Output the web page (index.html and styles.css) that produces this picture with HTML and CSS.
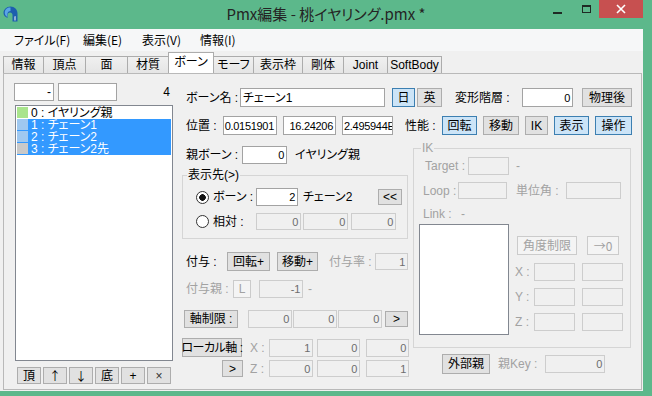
FILE: index.html
```html
<!DOCTYPE html>
<html lang="ja">
<head>
<meta charset="utf-8">
<title>Pmx編集</title>
<link rel="stylesheet" href="styles.css">
</head>
<body>
<div class="win">
  <div class="titlebar">
    <div class="tl">
      <svg class="appicon" width="15" height="16" viewBox="0 0 15 16">
        <path d="M7.5 0.5C11.5 0.5 14.5 3.5 14.5 7.5L14.5 15.5L9.5 15.5L9.5 9C9.5 7.5 8.5 6.5 7 6.5C5.5 6.5 4.5 7.5 4.5 9L4.5 12C2 11 0.5 9 0.5 7C0.5 3.5 3.5 0.5 7.5 0.5Z" fill="#1d5fae"/>
        <path d="M6 1.5C3.5 2 1.5 4.5 1.8 7.2C2 9 3 10.2 4.3 11L4.3 8.5C4.3 6 6 5 7.5 5L7.5 1.4Z" fill="#5aa5e6"/>
        <path d="M11.5 10.5L12.5 10L12.5 14.5L11.5 14.5Z" fill="#fff"/>
      </svg>
    </div>
    <div class="title">Pmx編集 - 桃イヤリング.pmx *</div>
    <div class="wbtns">
      <div class="wmin"></div>
      <div class="wmax"></div>
      <div class="wclose">
        <svg width="10" height="10" viewBox="0 0 10 10"><path d="M1 1L9 9M9 1L1 9" stroke="#fff" stroke-width="1.6"/></svg>
      </div>
    </div>
  </div>
  <div class="frame">
    <div class="client">
      <div class="menubar">
        <span class="mi w69">ファイル(F)</span>
        <span class="mi w59">編集(E)</span>
        <span class="mi w58">表示(V)</span>
        <span class="mi">情報(I)</span>
      </div>
      <div class="tabs">
        <div class="tab w41">情報</div>
        <div class="tab w43">頂点</div>
        <div class="tab w43">面</div>
        <div class="tab w42">材質</div>
        <div class="tab sel w46">ボーン</div>
        <div class="tab w41">モーフ</div>
        <div class="tab w50">表示枠</div>
        <div class="tab w42">剛体</div>
        <div class="tab w45">Joint</div>
        <div class="tab w55">SoftBody</div>
      </div>
      <div class="page">
        <div class="leftcol">
          <div class="row h18">
            <div class="tb w40 r">-</div>
            <div class="tb w59 ml4"></div>
            <div class="count">4</div>
          </div>
          <div class="list">
            <div class="li"><span class="sw sw-g"></span>0 : イヤリング親</div>
            <div class="li sel"><span class="sw sw-b"></span>1 : チェーン1</div>
            <div class="li sel"><span class="sw sw-b"></span>2 : チェーン2</div>
            <div class="li sel"><span class="sw sw-x"></span>3 : チェーン2先</div>
          </div>
          <div class="row h17 mt6 ml3 gap2">
            <div class="btn w24">頂</div>
            <div class="btn w24 sym">↑</div>
            <div class="btn w24 sym">↓</div>
            <div class="btn w24">底</div>
            <div class="btn w24">+</div>
            <div class="btn w24 thin">×</div>
          </div>
        </div>

        <div class="rightcol">
          <div class="row h19 mt5">
            <div class="lbl w54 ml5">ボーン名 :</div>
            <div class="tb w145">チェーン1</div>
            <div class="btn on w23 ml7">日</div>
            <div class="btn w25 ml2">英</div>
            <div class="lbl w67 ml13">変形階層 :</div>
            <div class="tb w51 r num">0</div>
            <div class="btn w50 ml9">物理後</div>
          </div>
          <div class="row h19 mt9">
            <div class="lbl w37 ml5">位置 :</div>
            <div class="tb w54 r num">0.0151901</div>
            <div class="tb w53 ml6 r num">16.24206</div>
            <div class="tb w51 ml6 num tight">2.495944E-07</div>
            <div class="lbl w37 ml12">性能 :</div>
            <div class="btn on w35">回転</div>
            <div class="btn w36 ml6">移動</div>
            <div class="btn w23 ml6">IK</div>
            <div class="btn on w35 ml6">表示</div>
            <div class="btn on w37 ml6">操作</div>
          </div>

          <div class="section">
            <div class="subl">
              <div class="row h18 mt11">
                <div class="lbl w56 ml5">親ボーン :</div>
                <div class="tb w45 r num">0</div>
                <div class="lbl ml8">イヤリング親</div>
              </div>
              <fieldset class="grp grp-disp mt4 ml1">
                <legend>表示先(&gt;)</legend>
                <div class="row h18 mt6">
                  <span class="radio on ml13"></span>
                  <div class="lbl w43 ml4">ボーン :</div>
                  <div class="tb w42 r num">2</div>
                  <div class="lbl ml5">チェーン2</div>
                  <div class="btn w24 sh16 push">&lt;&lt;</div>
                </div>
                <div class="row h17 mt7">
                  <span class="radio ml13"></span>
                  <div class="lbl w43 ml4">相対 :</div>
                  <div class="tb dis w45 r num">0</div>
                  <div class="tb dis w45 ml2 r num">0</div>
                  <div class="tb dis w45 ml3 r num">0</div>
                </div>
              </fieldset>
              <div class="row h19 mt13">
                <div class="lbl w41 ml5">付与 :</div>
                <div class="btn w43">回転+</div>
                <div class="btn w41 ml7">移動+</div>
                <div class="lbl dis w46 ml11">付与率 :</div>
                <div class="tb dis w33 sh17 r num">1</div>
              </div>
              <div class="row h18 mt9">
                <div class="lbl dis w47 ml5">付与親 :</div>
                <div class="btn dis w18">L</div>
                <div class="tb dis w44 ml8 r num">-1</div>
                <div class="lbl dis ml5">-</div>
              </div>
              <div class="row h18 mt12">
                <div class="btn w54 ml3">軸制限 :</div>
                <div class="tb dis w44 ml10 r num">0</div>
                <div class="tb dis w44 ml1 r num">0</div>
                <div class="tb dis w44 ml1 r num">0</div>
                <div class="btn w23 ml3 sh16">&gt;</div>
              </div>
              <div class="row h19 mt10">
                <div class="btn w60 ml1 narrow">ローカル軸 :</div>
                <div class="lbl dis w19 ml8">X :</div>
                <div class="tb dis w44 sh18 r num">1</div>
                <div class="tb dis w43 sh18 ml4 r num">0</div>
                <div class="tb dis w43 sh18 ml6 r num">0</div>
              </div>
              <div class="row h17 mt3">
                <div class="btn w21 ml41">&gt;</div>
                <div class="lbl dis w19 ml7">Z :</div>
                <div class="tb dis w44 r num">0</div>
                <div class="tb dis w43 ml4 r num">0</div>
                <div class="tb dis w43 ml6 r num">1</div>
              </div>
            </div>

            <div class="subr">
              <fieldset class="grp grp-ik mt6">
                <legend class="dis">IK</legend>
                <div class="row h18 mt2">
                  <div class="lbl dis w43 ml11">Target :</div>
                  <div class="tb dis w41"></div>
                  <div class="lbl dis ml7">-</div>
                </div>
                <div class="row h17 mt7">
                  <div class="lbl dis w35 ml9">Loop :</div>
                  <div class="tb dis w49"></div>
                  <div class="lbl dis w50 ml9">単位角 :</div>
                  <div class="tb dis w55"></div>
                </div>
                <div class="row h14 mt8">
                  <div class="lbl dis w38 ml9">Link :</div>
                  <div class="lbl dis">-</div>
                </div>
                <div class="ikbody mt3">
                  <div class="linklist ml5"></div>
                  <div class="ikside ml6">
                    <div class="row h19 mt12">
                      <div class="btn dis w60 ml2">角度制限</div>
                      <div class="btn dis w32 ml10 sym">→0</div>
                    </div>
                    <div class="row h18 mt8">
                      <div class="lbl dis w19">X :</div>
                      <div class="tb dis w41"></div>
                      <div class="tb dis w41 ml7"></div>
                    </div>
                    <div class="row h18 mt7">
                      <div class="lbl dis w19">Y :</div>
                      <div class="tb dis w41"></div>
                      <div class="tb dis w41 ml7"></div>
                    </div>
                    <div class="row h18 mt7">
                      <div class="lbl dis w19">Z :</div>
                      <div class="tb dis w41"></div>
                      <div class="tb dis w41 ml7"></div>
                    </div>
                  </div>
                </div>
              </fieldset>
              <div class="row h20 mt6">
                <div class="btn w48 ml29">外部親</div>
                <div class="lbl dis w47 ml8">親Key :</div>
                <div class="tb dis w60 sh18 r num">0</div>
              </div>
            </div>
          </div>
        </div>
      </div>
    </div>
  </div>
</div>
</body>
</html>
```
FILE: styles.css
```css
* { box-sizing: border-box; }
html, body { margin: 0; padding: 0; }
body {
  width: 652px;
  height: 396px;
  overflow: hidden;
  background: #5cb88b;
  color: #000;
  font: 12px/14px "Liberation Sans", "Noto Sans CJK JP", sans-serif;
  font-feature-settings: "palt" 1;
}
.win { display: flex; flex-direction: column; height: 396px; }

/* title bar */
.titlebar {
  height: 29px;
  flex: none;
  display: grid;
  grid-template-columns: 1fr auto 1fr;
  align-items: start;
}
.appicon { display: block; margin: 6px 0 0 3px; }
.title {
  font-family: "Noto Sans CJK JP", "Liberation Sans", sans-serif;
  font-size: 15px;
  line-height: 18px;
  margin-top: 5px;
  color: #242424;
  white-space: nowrap;
}
.wbtns { display: flex; justify-content: flex-end; align-items: flex-start; }
.wmin { width: 9px; height: 2px; background: #1f2a24; margin: 12px 20px 0 0; }
.wmax { width: 9px; height: 8px; border: 1px solid #1f2a24; border-top-width: 2px; margin: 5px 8px 0 0; }
.wclose {
  width: 44px; height: 18px; margin-right: 9px;
  background: #c75050;
  display: flex; align-items: center; justify-content: center;
}
.wclose svg { display: block; }

/* frame */
.frame { flex: none; height: 362px; display: flex; }
.client { width: 643px; height: 362px; background: #f0f0f0; display: flex; flex-direction: column; }

.menubar {
  height: 22px; flex: none;
  background: #f6f7f8;
  display: flex; align-items: center;
  padding-left: 14px;
  font-family: "Noto Sans CJK JP", "Liberation Sans", sans-serif;
}
.mi { flex: none; white-space: nowrap; }

.tabs {
  height: 22px; flex: none;
  display: flex; align-items: flex-end;
  padding-left: 3px;
}
.tab {
  flex: none;
  height: 17px;
  margin-right: -1px;
  border: 1px solid #acacac;
  border-bottom: none;
  background: linear-gradient(#f0f0f0, #e5e5e5);
  display: flex; align-items: center; justify-content: center;
  white-space: nowrap;
}
.tab.sel { height: 21px; background: #fff; padding-bottom: 3px; }

.page {
  margin-left: 3px;
  width: 639px;
  height: 317px;
  flex: none;
  border: 1px solid #b9b9b9;
  background: #f0f0f0;
  display: flex;
  padding: 9px 0 0 10px;
}

/* layout helpers */
.row { display: flex; align-items: center; flex: none; }
.lbl { flex: none; white-space: nowrap; }
.dis { color: #a2a2a2; }
.push { margin-left: auto; margin-right: 5px; }
.gap2 { gap: 2px; }

.tb {
  flex: none;
  align-self: stretch;
  border: 1px solid #a3a3a3;
  background: #fff;
  padding: 0 2px;
  display: flex; align-items: center;
  white-space: nowrap;
  overflow: hidden;
}
.tb.r { justify-content: flex-end; }
.tb.dis { background: #f0f0f0; border-color: #cdcdcd; color: #6d6d6d; }
.num { font-size: 11px; letter-spacing: -0.3px; }
.tight { padding-left: 1px; }
.sym { font-family: "Noto Sans CJK JP", "DejaVu Sans", sans-serif; }
.narrow { letter-spacing: -0.5px; }

.btn {
  flex: none;
  align-self: stretch;
  border: 1px solid #adadad;
  background: #e1e1e1;
  display: flex; align-items: center; justify-content: center;
  white-space: nowrap;
}
.btn.on { background: #cce4f7; border-color: #3c7fb1; }
.btn.dis { background: #f4f4f4; border-color: #cbcbcb; color: #a2a2a2; }
.btn.thin { color: #333; }
.sh16 { align-self: center; height: 16px; }
.sh17 { align-self: center; height: 17px; }
.sh18 { align-self: center; height: 18px; }

.radio {
  flex: none;
  width: 13px; height: 13px;
  border-radius: 50%;
  border: 1px solid #333;
  background: #fff;
}
.radio.on { background: radial-gradient(circle, #111 0 3px, #fff 3.6px); }

/* left column */
.leftcol { width: 159px; flex: none; display: flex; flex-direction: column; }
.count { flex: 1; text-align: right; padding-right: 3px; }
.list {
  margin: 4px 0 0 1px;
  width: 158px; height: 256px;
  border: 1px solid #828790;
  background: #fff;
  padding: 1px 1px 0 1px;
  flex: none;
}
.li {
  height: 12px;
  line-height: 12px;
  display: flex; align-items: center;
  white-space: nowrap;
}
.li.sel { background: #3399ff; color: #fff; }
.sw { width: 11px; height: 11px; margin-right: 3px; flex: none; align-self: flex-start; }
.sw-g { background: #a9e48c; }
.sw-b { background: #9fc8f0; }
.sw-x { background: #c9c9c9; }

/* right column */
.rightcol { flex: none; width: 451px; margin-left: 8px; display: flex; flex-direction: column; }
.section { display: flex; align-items: flex-start; }
.subl { width: 227px; flex: none; display: flex; flex-direction: column; }
.subr { width: 218px; flex: none; margin-left: 5px; display: flex; flex-direction: column; }

.grp {
  margin: 0;
  padding: 0;
  min-width: 0;
  border: 1px solid #d5d5d5;
  display: flex;
  flex-direction: column;
}
.grp legend { padding: 0 1px; line-height: 14px; }
.grp-disp { width: 226px; padding-bottom: 8px; }
.grp-disp legend { margin-left: 4px; }
.grp-ik { width: 218px; padding-bottom: 12px; }
.grp-ik legend { margin-left: 7px; }

.ikbody { display: flex; align-items: flex-start; }
.linklist { width: 90px; height: 111px; flex: none; border: 1px solid #828790; background: #fff; }
.ikside { display: flex; flex-direction: column; }

/* sizes */
.h14 { height: 14px; } .h17 { height: 17px; } .h18 { height: 18px; } .h19 { height: 19px; } .h20 { height: 20px; }
.w18 { width: 18px; } .w19 { width: 19px; } .w21 { width: 21px; } .w23 { width: 23px; } .w24 { width: 24px; }
.w25 { width: 25px; } .w32 { width: 32px; } .w33 { width: 33px; } .w35 { width: 35px; } .w36 { width: 36px; }
.w37 { width: 37px; } .w38 { width: 38px; } .w40 { width: 40px; } .w41 { width: 41px; } .w42 { width: 42px; }
.w43 { width: 43px; } .w44 { width: 44px; } .w45 { width: 45px; } .w46 { width: 46px; } .w47 { width: 47px; }
.w48 { width: 48px; } .w49 { width: 49px; } .w50 { width: 50px; } .w51 { width: 51px; } .w53 { width: 53px; }
.w54 { width: 54px; } .w55 { width: 55px; } .w56 { width: 56px; } .w58 { width: 58px; } .w59 { width: 59px; }
.w60 { width: 60px; } .w67 { width: 67px; } .w69 { width: 69px; } .w145 { width: 145px; }
.ml1 { margin-left: 1px; } .ml2 { margin-left: 2px; } .ml3 { margin-left: 3px; } .ml4 { margin-left: 4px; }
.ml5 { margin-left: 5px; } .ml6 { margin-left: 6px; } .ml7 { margin-left: 7px; } .ml8 { margin-left: 8px; }
.ml9 { margin-left: 9px; } .ml10 { margin-left: 10px; } .ml11 { margin-left: 11px; } .ml12 { margin-left: 12px; }
.ml13 { margin-left: 13px; } .ml29 { margin-left: 29px; } .ml41 { margin-left: 41px; }
.mt2 { margin-top: 2px; } .mt3 { margin-top: 3px; } .mt4 { margin-top: 4px; } .mt5 { margin-top: 5px; }
.mt6 { margin-top: 6px; } .mt7 { margin-top: 7px; } .mt8 { margin-top: 8px; } .mt9 { margin-top: 9px; }
.mt10 { margin-top: 10px; } .mt11 { margin-top: 11px; } .mt12 { margin-top: 12px; } .mt13 { margin-top: 13px; }
```
